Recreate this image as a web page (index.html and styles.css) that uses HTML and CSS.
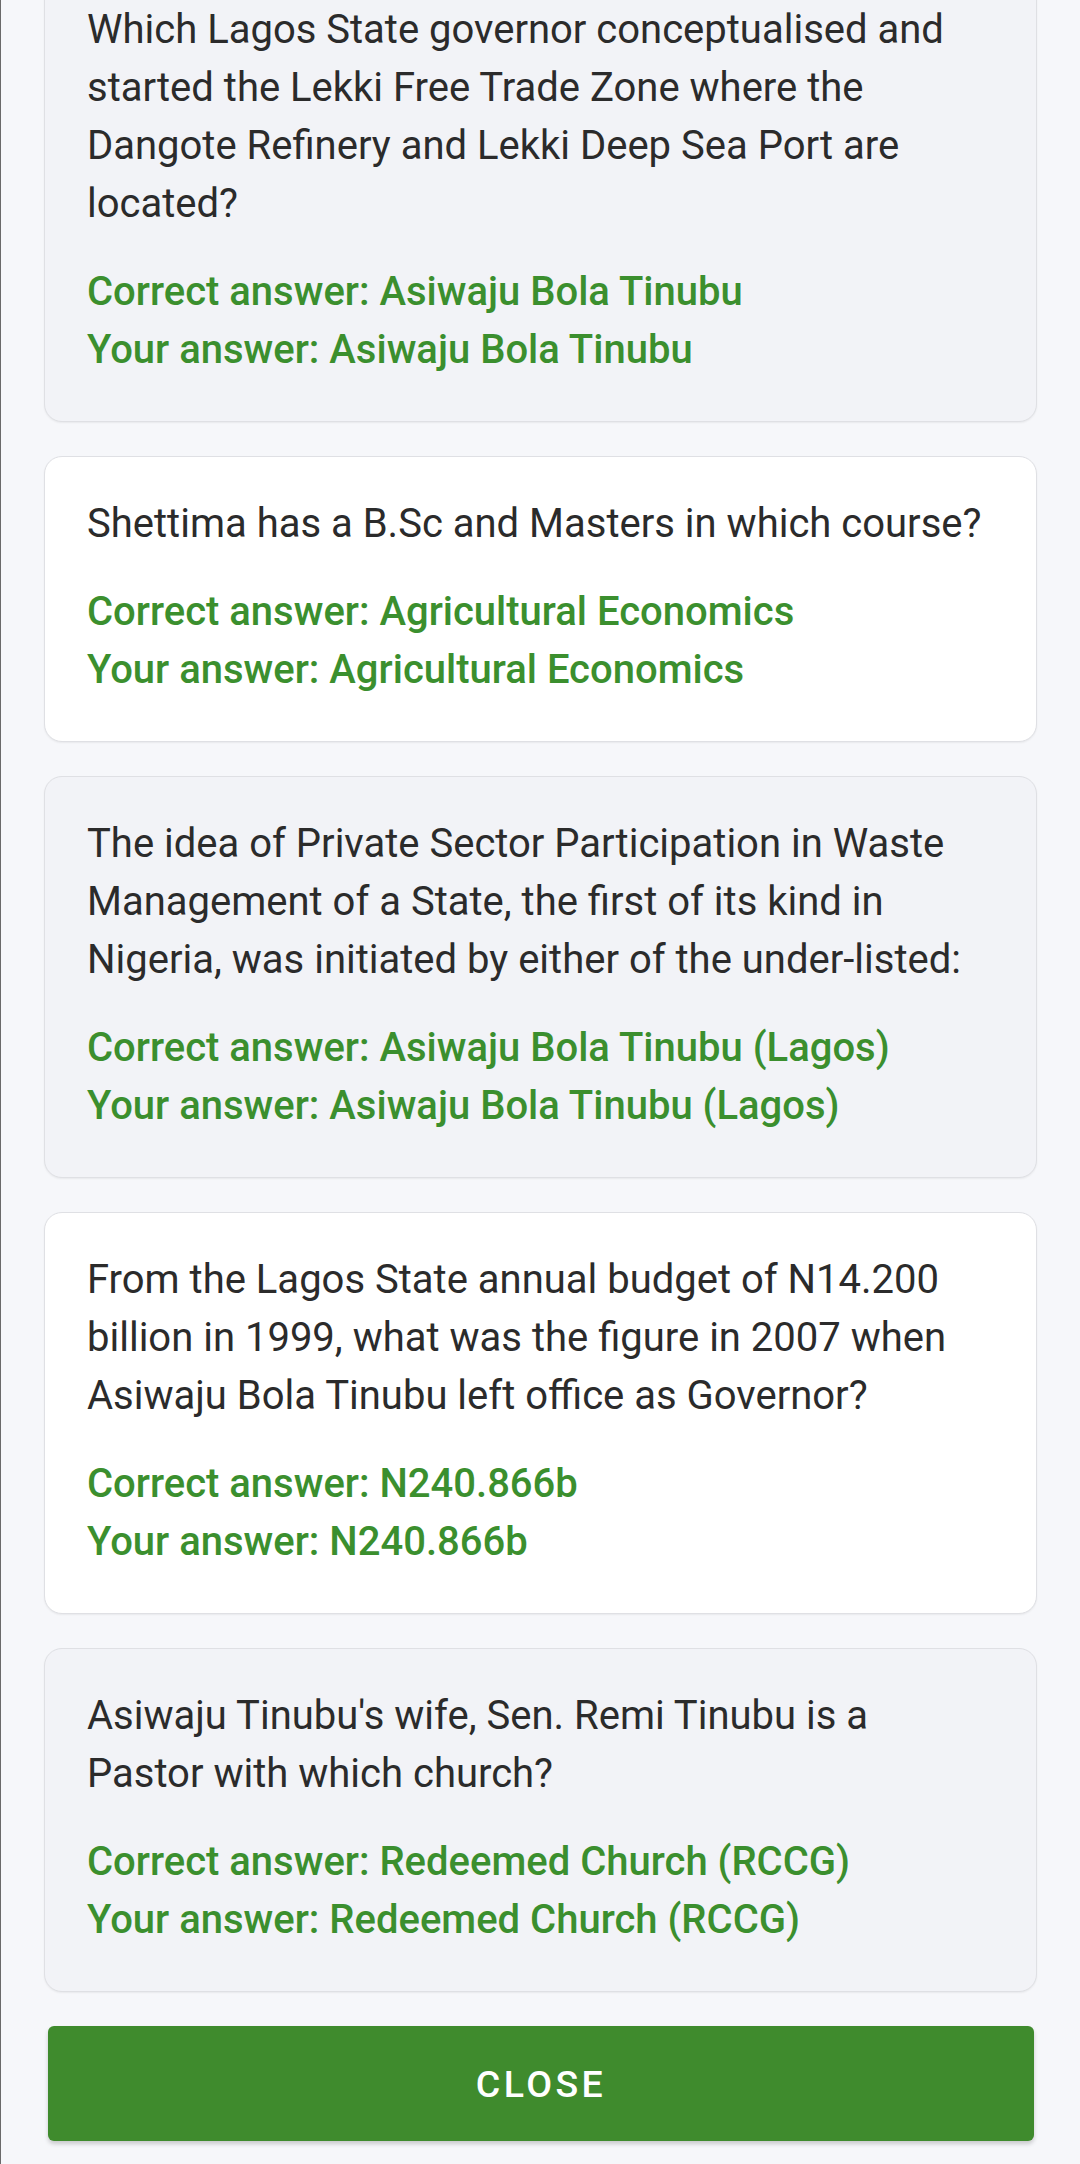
FILE: index.html
```html
<!DOCTYPE html>
<html>
<head>
<meta charset="utf-8">
<link rel="stylesheet" href="styles.css">
</head>
<body>
<div class="screen">
  <div class="list">
    <div class="card alt">
      <p class="q">Which Lagos State governor conceptualised and started the Lekki Free Trade Zone where the Dangote Refinery and Lekki Deep Sea Port are located?</p>
      <p class="a">Correct answer: Asiwaju Bola Tinubu</p>
      <p class="a">Your answer: Asiwaju Bola Tinubu</p>
    </div>
    <div class="card">
      <p class="q">Shettima has a B.Sc and Masters in which course?</p>
      <p class="a">Correct answer: Agricultural Economics</p>
      <p class="a">Your answer: Agricultural Economics</p>
    </div>
    <div class="card alt">
      <p class="q">The idea of Private Sector Participation in Waste Management of a State, the first of its kind in Nigeria, was initiated by either of the under-listed:</p>
      <p class="a">Correct answer: Asiwaju Bola Tinubu (Lagos)</p>
      <p class="a">Your answer: Asiwaju Bola Tinubu (Lagos)</p>
    </div>
    <div class="card">
      <p class="q">From the Lagos State annual budget of N14.200 billion in 1999, what was the figure in 2007 when Asiwaju Bola Tinubu left office as Governor?</p>
      <p class="a">Correct answer: N240.866b</p>
      <p class="a">Your answer: N240.866b</p>
    </div>
    <div class="card alt">
      <p class="q">Asiwaju Tinubu's wife, Sen. Remi Tinubu is a Pastor with which church?</p>
      <p class="a">Correct answer: Redeemed Church (RCCG)</p>
      <p class="a">Your answer: Redeemed Church (RCCG)</p>
    </div>
  </div>
  <button class="close">CLOSE</button>
</div>
</body>
</html>
```
FILE: styles.css
```css
html, body {
  margin: 0;
  padding: 0;
  background: #f6f7fa;
}
body {
  font-family: Roboto, "Liberation Sans", sans-serif;
  width: 1080px;
  height: 2164px;
  overflow: hidden;
  border-left: 1px solid #6a6a6a;
  box-sizing: border-box;
}
.screen {
  margin-top: -38px;
  padding: 0 43px 0 43px;
  display: flex;
  flex-direction: column;
}
.list {
  display: flex;
  flex-direction: column;
  gap: 34px;
}
.card {
  background: #ffffff;
  border: 1px solid #dfe0e4;
  border-radius: 18px;
  padding: 38px 47px 42px 42px;
  box-shadow: 0 1px 2px rgba(0,0,0,0.06);
}
.card.alt {
  background: #f2f3f7;
}
.q {
  margin: 0 0 30px 0;
  font-size: 40px;
  line-height: 58px;
  color: #2b2b2b;
}
.a {
  margin: 0;
  font-size: 40px;
  line-height: 58px;
  font-weight: 500;
  color: #3b8f2e;
}
.close {
  margin: 34px 3px 0 4px;
  height: 115px;
  border: none;
  border-radius: 6px;
  background: #3f8b2d;
  color: #ffffff;
  font-family: Roboto, "Liberation Sans", sans-serif;
  font-size: 37.5px;
  font-weight: 500;
  letter-spacing: 3.4px;
  box-shadow: 0 3px 4px rgba(0,0,0,0.18);
}
```
